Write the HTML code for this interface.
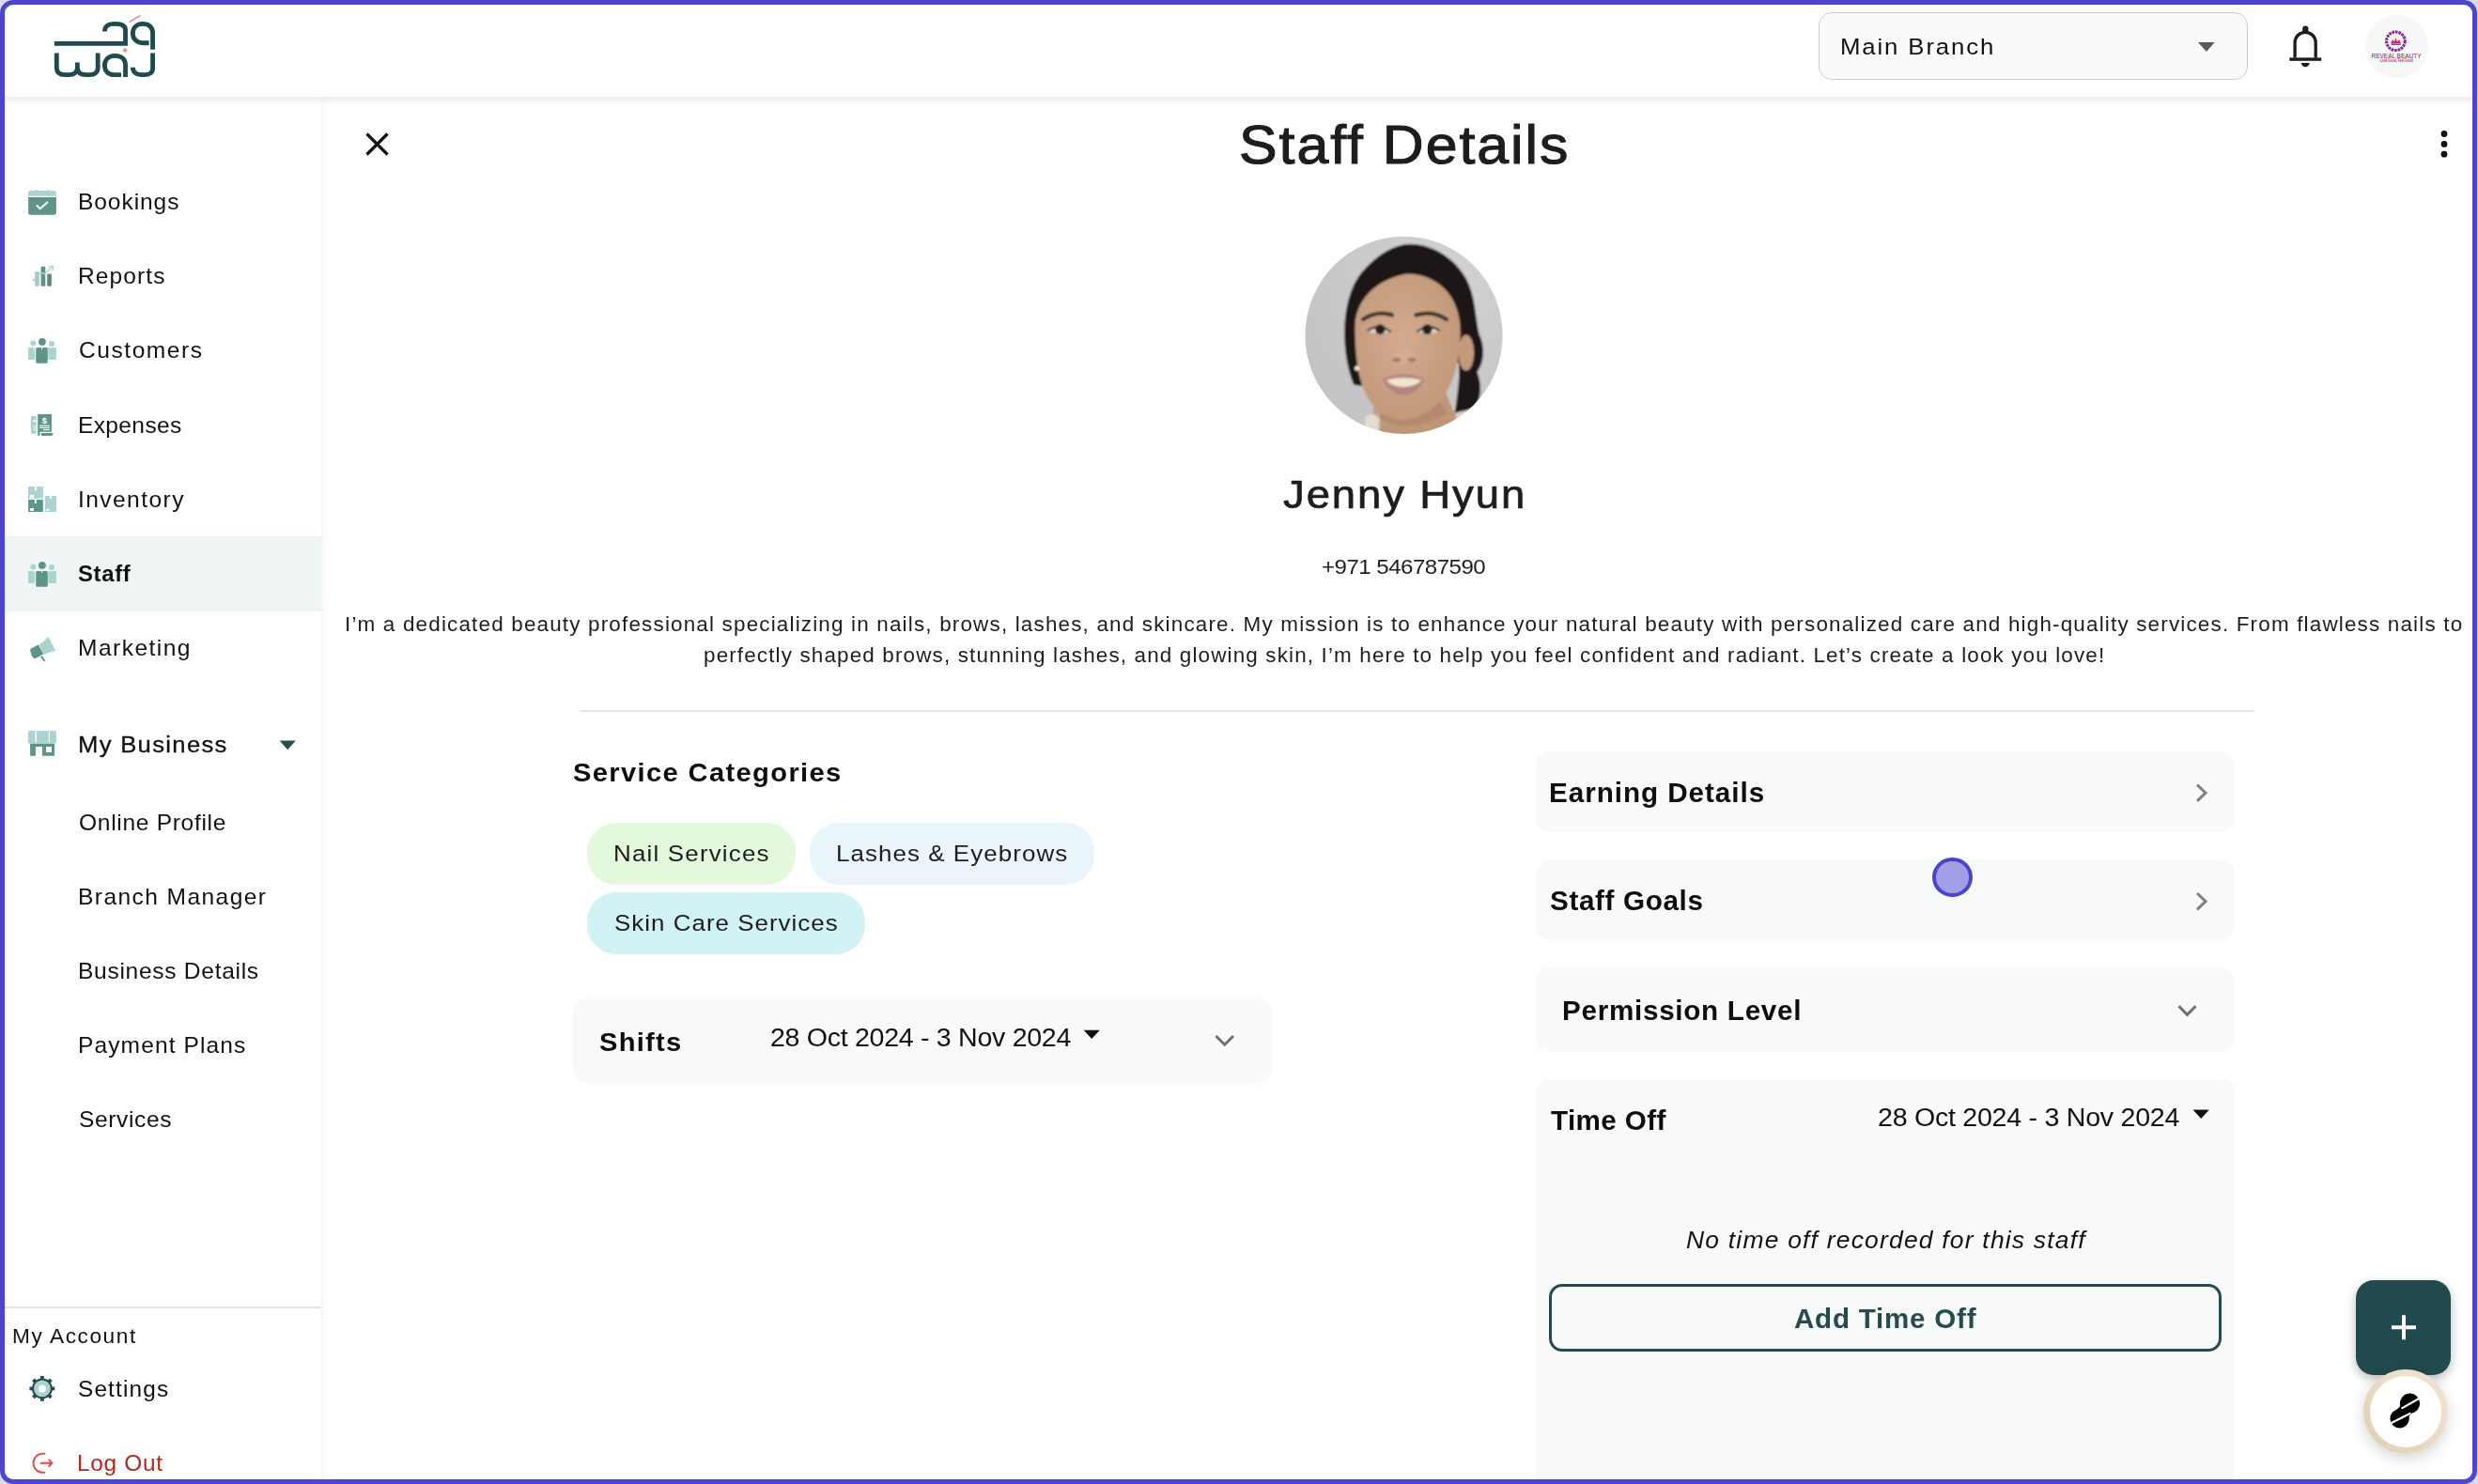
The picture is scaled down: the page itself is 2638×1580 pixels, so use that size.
<!DOCTYPE html>
<html><head><meta charset="utf-8">
<style>
*{margin:0;padding:0;box-sizing:border-box}
html,body{width:2638px;height:1580px;overflow:hidden;background:#dcd9f4;font-family:"Liberation Sans",sans-serif;color:#1d1d1b}
#page{position:absolute;left:0;top:0;width:2637px;height:1580px;border-radius:14px;background:#fff;overflow:hidden}
#frame{position:absolute;left:0;top:0;width:2637px;height:1580px;border:5px solid #4c45d0;border-radius:14px;z-index:50;pointer-events:none}
.t{position:absolute;white-space:nowrap;line-height:1;z-index:10}
svg{position:absolute;overflow:visible}
.abs{position:absolute}
#header{position:absolute;left:0;top:0;width:2637px;height:103px;background:#fff;box-shadow:0 3px 8px rgba(80,70,30,0.12);z-index:5}
#sidebar{position:absolute;left:0;top:103px;width:342px;height:1477px;background:#fff;box-shadow:1px 0 8px rgba(80,70,30,0.08);z-index:4}
.card{position:absolute;background:#f8faf9;border-radius:15px}
.chip{position:absolute;border-radius:31px;height:66px}
</style></head>
<body>
<div id="page">
  <div id="header">
    <!-- logo -->
    <svg style="left:40px;top:10px" width="150" height="85" viewBox="0 0 2478 1404">
      <g fill="none" stroke="#1f4a4e" stroke-width="80" stroke-linecap="butt" stroke-linejoin="miter">
        <path d="M295 600 H1545 V360 C1545 290 1490 255 1360 255 C1235 255 1180 295 1180 390"/>
        <path d="M2025 705 V420 C2025 310 1960 255 1850 255 C1745 255 1675 320 1675 420 C1675 520 1745 590 1850 590 H1960"/>
        <path d="M335 770 V1030 C335 1110 395 1150 475 1150 H560 C640 1150 700 1100 700 1030 V935"/>
        <path d="M700 1030 C700 1110 760 1150 845 1150 H925 C1005 1150 1060 1105 1060 1030 V770"/>
        <path d="M1545 1190 V975 C1545 875 1470 815 1360 815 C1250 815 1180 885 1180 985 C1180 1085 1250 1150 1350 1150 H1470"/>
        <path d="M2025 770 V1040 C2025 1110 1965 1150 1880 1150 H1820 C1730 1150 1675 1100 1675 1020"/>
      </g>
      <path d="M1625 215 L1795 115" stroke="#e9939f" stroke-width="32" stroke-linecap="round"/>
      <path d="M1540 675 L1585 720 L1540 765 L1495 720 Z" fill="#e9939f"/>
    </svg>
    <!-- branch selector -->
    <div class="abs" style="left:1936px;top:13px;width:457px;height:72px;border:1.5px solid #cdccc6;border-radius:14px;background:#fafafa"></div>
    <svg style="left:0;top:0" width="1" height="1"><path d="M2340 45 H2357.7 L2348.85 55 Z" fill="#5a5a58"/></svg>
    <!-- bell -->
    <svg style="left:0;top:0" width="1" height="1">
      <path d="M2443.1 61.6 V45.3 A11.05 11.05 0 0 1 2465.2 45.3 V61.6" fill="none" stroke="#1c1c1a" stroke-width="3.3"/>
      <rect x="2437.4" y="61.4" width="33.8" height="3.4" fill="#1c1c1a"/>
      <path d="M2451.2 33.5 V30.6 A3.1 3.1 0 0 1 2457.4 30.6 V33.5 Z" fill="#1c1c1a"/>
      <path d="M2450 67 H2458.5 A4.25 4.25 0 0 1 2450 67 Z" fill="#1c1c1a"/>
    </svg>
    <!-- avatar -->
    <div class="abs" style="left:2518px;top:16px;width:67px;height:67px;border-radius:50%;background:#f7f7f8"></div>
    <svg style="left:0;top:0" width="1" height="1">
      <circle cx="2550.4" cy="43.8" r="9.8" fill="none" stroke="#7a2a8c" stroke-width="3" stroke-dasharray="2.6 0.9"/>
      <path d="M2545 46.5 L2547 42 L2549 44.5 L2550.4 40 L2552 44.5 L2554 42 L2556 46.5 Z" fill="#d1207e"/>
      <rect x="2545.5" y="46.8" width="10" height="1.2" fill="#d1207e"/>
      <text x="2551" y="61.8" font-family="Liberation Sans" font-size="6.8" fill="#6a2379" text-anchor="middle" textLength="53" lengthAdjust="spacingAndGlyphs">REVEAL BEAUTY</text>
      <text x="2551.3" y="66" font-family="Liberation Sans" font-weight="700" font-size="4.6" fill="#d8237f" text-anchor="middle" textLength="35" lengthAdjust="spacingAndGlyphs">Look Good, Feel Good</text>
    </svg>
  </div>

  <div id="sidebar">
  </div>
  <!-- sidebar content (page coords) -->
  <div class="abs" style="left:5px;top:571px;width:337px;height:79.5px;background:#eff5f4;z-index:6"></div>
  <div class="abs" style="left:5px;top:1391px;width:337px;height:2px;background:#e4e4e4;z-index:6"></div>

  <!-- Bookings icon -->
  <svg style="left:20px;top:190px;z-index:7" width="50" height="50" viewBox="0 0 50 50">
    <path d="M12.1 13 H37.9 Q39.9 13 39.9 15 V18.7 H10.1 V15 Q10.1 13 12.1 13 Z" fill="#acd3cf"/>
    <rect x="18.2" y="12" width="1.7" height="1.5" fill="#acd3cf"/><rect x="30.2" y="12" width="1.7" height="1.5" fill="#acd3cf"/>
    <path d="M10.1 20 H39.9 V36.5 Q39.9 38.7 37.7 38.7 H12.3 Q10.1 38.7 10.1 36.5 Z" fill="#5f9488"/>
    <path d="M19.5 29 L22.6 32.2 L30.4 25.6" fill="none" stroke="#fff" stroke-width="2" stroke-linecap="round" stroke-linejoin="round"/>
  </svg>
  <!-- Reports icon -->
  <svg style="left:20px;top:270px;z-index:7" width="50" height="50" viewBox="0 0 50 50">
    <rect x="17.2" y="19.2" width="4.7" height="15.5" rx="1" fill="#a3c8c5"/>
    <rect x="23.6" y="13.8" width="4.7" height="20.9" rx="1" fill="#5f9488"/>
    <rect x="30.2" y="21.6" width="4.7" height="13.1" rx="1" fill="#5e8a7f"/>
    <path d="M15.2 28.6 L21 22.8 Q24.5 19.5 27.5 21.6 L35.6 14" fill="none" stroke="#acd3cf" stroke-width="1.4" stroke-linecap="round"/>
    <path d="M31.4 13.6 H36.2 V18.4" fill="none" stroke="#acd3cf" stroke-width="1.4"/>
  </svg>
  <!-- Customers icon -->
  <svg style="left:20px;top:348px;z-index:7" width="50" height="50" viewBox="0 0 50 50" id="ppl">
    <circle cx="15.3" cy="17.6" r="3" fill="#acd3cf"/>
    <path d="M11.1 22 H14.9 L15.4 24 L15.9 22 H16.9 V34.9 H11.1 Q10.1 34.9 10.1 33.9 V23 Q10.1 22 11.1 22 Z" fill="#acd3cf"/>
    <circle cx="35" cy="18.1" r="3" fill="#acd3cf"/>
    <path d="M31.3 22 H33.9 L34.4 24.5 L34.9 22 H38.9 Q39.9 22 39.9 23 V34 Q39.9 35 38.9 35 H31.3 Z" fill="#acd3cf"/>
    <circle cx="24.9" cy="15.9" r="3.9" fill="#5f9488"/>
    <path d="M19.7 22 H23.9 L24.6 25 L25.3 22 H29.3 Q30.8 22 30.8 23.5 V37.2 Q30.8 38.7 29.3 38.7 H19.7 Q18.2 38.7 18.2 37.2 V23.5 Q18.2 22 19.7 22 Z" fill="#5f9488"/>
  </svg>
  <!-- Expenses icon -->
  <svg style="left:20px;top:427px;z-index:7" width="50" height="50" viewBox="0 0 50 50">
    <path d="M14.1 16 H18.7 V34.7 H14.1 Q13.1 34.7 13.1 33.7 V17 Q13.1 16 14.1 16 Z" fill="#a8cfcb"/>
    <rect x="15" y="20" width="3.7" height="2.2" fill="#fff" opacity="0.8"/>
    <rect x="15" y="26.3" width="3.7" height="1" fill="#fff" opacity="0.8"/>
    <rect x="15" y="28.3" width="3.7" height="1" fill="#fff" opacity="0.8"/>
    <rect x="15" y="30.3" width="3.7" height="1" fill="#fff" opacity="0.8"/>
    <path d="M20.2 14 H34.9 V32.7 H22.4 V35.9 Q22.4 36.9 21.4 36.9 H21.2 Q20.2 36.9 20.2 35.9 Z" fill="#5f9488"/>
    <path d="M23.9 34 H36.7 L36 36.2 Q35.6 37 34.8 37 H23.9 Z" fill="#5f9488"/>
    <text x="27.5" y="23.6" font-family="Liberation Sans" font-weight="700" font-size="9.5" fill="#fff" text-anchor="middle">$</text>
    <rect x="22" y="25.7" width="10.9" height="1.1" fill="#fff"/>
    <rect x="22" y="27.8" width="10.9" height="1.1" fill="#fff"/>
    <rect x="26" y="29.9" width="6.9" height="1.1" fill="#fff"/>
  </svg>
  <!-- Inventory icon -->
  <svg style="left:20px;top:506px;z-index:7" width="50" height="50" viewBox="0 0 50 50">
    <path d="M10.1 12.1 H16.8 V16.2 H18.9 V12.1 H25.8 V24.8 H10.1 Z" fill="#acd3cf"/>
    <rect x="12" y="21" width="4" height="2.9" fill="#fff"/>
    <path d="M10.1 26.1 H16.8 V30.1 H18.9 V26.1 H25.8 V38.9 H10.1 Z" fill="#5f9488"/>
    <rect x="12" y="35" width="4" height="2.9" fill="#fff"/>
    <path d="M28.1 22.1 H32.9 V25.1 H35 V22.1 H39.9 V38.9 H28.1 Z" fill="#acd3cf"/>
    <rect x="29" y="36" width="3.3" height="1.9" fill="#fff"/>
  </svg>
  <!-- Staff icon -->
  <svg style="left:20px;top:585.6px;z-index:7" width="50" height="50" viewBox="0 0 50 50">
    <circle cx="15.3" cy="17.6" r="3" fill="#acd3cf"/>
    <path d="M11.1 22 H14.9 L15.4 24 L15.9 22 H16.9 V34.9 H11.1 Q10.1 34.9 10.1 33.9 V23 Q10.1 22 11.1 22 Z" fill="#acd3cf"/>
    <circle cx="35" cy="18.1" r="3" fill="#acd3cf"/>
    <path d="M31.3 22 H33.9 L34.4 24.5 L34.9 22 H38.9 Q39.9 22 39.9 23 V34 Q39.9 35 38.9 35 H31.3 Z" fill="#acd3cf"/>
    <circle cx="24.9" cy="15.9" r="3.9" fill="#5f9488"/>
    <path d="M19.7 22 H23.9 L24.6 25 L25.3 22 H29.3 Q30.8 22 30.8 23.5 V37.2 Q30.8 38.7 29.3 38.7 H19.7 Q18.2 38.7 18.2 37.2 V23.5 Q18.2 22 19.7 22 Z" fill="#5f9488"/>
  </svg>
  <!-- Marketing icon -->
  <svg style="left:20px;top:664px;z-index:7" width="50" height="50" viewBox="0 0 50 50">
    <path d="M21.6 21.9 Q27 19.5 31.3 13.5 L39.4 29.3 Q32 29.8 27 33.4 Z" fill="#acd3cf"/>
    <path d="M13.8 26 L20.9 22.6 L26.3 32.3 L19 36.6 Q15.5 38 14 34.5 L12.4 30 Q11.5 27 13.8 26 Z" fill="#5f9488"/>
    <path d="M24.3 35.4 L27 39.1" stroke="#5f9488" stroke-width="2" stroke-linecap="round"/>
  </svg>
  <!-- My Business icon -->
  <svg style="left:20px;top:767px;z-index:7" width="50" height="50" viewBox="0 0 50 50">
    <path d="M12.5 11.1 H37.5 Q40 11.1 40 13.6 V22.5 Q40 24.9 37.5 24.9 H12.3 Q9.8 24.9 9.8 22.5 V13.6 Q9.8 11.1 12.5 11.1 Z" fill="#acd3cf"/>
    <rect x="17.5" y="11" width="1.4" height="12.5" fill="#fff"/>
    <rect x="31.8" y="11" width="1.1" height="12.5" fill="#fff"/>
    <path d="M12.1 24.9 H38.1 V37.7 H24.9 V28 H17.9 V37.7 H12.1 Z" fill="#5f9488"/>
    <rect x="29" y="28" width="6" height="6" fill="#fff"/>
  </svg>
  <!-- My Business caret -->
  <svg style="left:0;top:0;z-index:7" width="1" height="1"><path d="M297.6 788.5 H314.8 L306.2 798.2 Z" fill="#2a4f50"/></svg>
  <!-- Settings icon -->
  <svg style="left:20px;top:1453px;z-index:7" width="50" height="50" viewBox="0 0 50 50">
    <g fill="#234a4e" transform="translate(24.9 25.4)">
      <circle r="10.9"/>
      <rect x="-1.9" y="-13.4" width="3.8" height="5" /><rect x="-1.9" y="-13.4" width="3.8" height="5" transform="rotate(45)"/>
      <rect x="-1.9" y="-13.4" width="3.8" height="5" transform="rotate(90)"/><rect x="-1.9" y="-13.4" width="3.8" height="5" transform="rotate(135)"/>
      <rect x="-1.9" y="-13.4" width="3.8" height="5" transform="rotate(180)"/><rect x="-1.9" y="-13.4" width="3.8" height="5" transform="rotate(225)"/>
      <rect x="-1.9" y="-13.4" width="3.8" height="5" transform="rotate(270)"/><rect x="-1.9" y="-13.4" width="3.8" height="5" transform="rotate(315)"/>
      <circle r="8.9" fill="#acd3cf"/>
      <circle r="4" fill="#fff"/>
    </g>
  </svg>
  <!-- Logout icon -->
  <svg style="left:20px;top:1532px;z-index:7" width="50" height="50" viewBox="0 0 50 50">
    <path d="M27.4 15.8 Q26.5 15.6 25.6 15.6 A10.1 10.1 0 0 0 25.6 35.8 Q26.5 35.8 27.4 35.7" fill="none" stroke="#dc4b45" stroke-width="1.9" stroke-linecap="round"/>
    <path d="M23.6 25.7 H35.4 M32.2 22.4 L35.5 25.7 L32.2 29" fill="none" stroke="#dc4b45" stroke-width="1.9" stroke-linecap="round" stroke-linejoin="round"/>
  </svg>

  <!-- MAIN -->
  <svg style="left:0;top:0" width="1" height="1">
    <path d="M390.5 142.5 L412.5 164.5 M412.5 142.5 L390.5 164.5" stroke="#111" stroke-width="3.2"/>
    <circle cx="2602" cy="142.5" r="3.4" fill="#111"/><circle cx="2602" cy="153.4" r="3.4" fill="#111"/><circle cx="2602" cy="164.2" r="3.4" fill="#111"/>
  </svg>
  <!-- photo -->
  <svg style="left:1370px;top:240px" width="250" height="240" viewBox="0 0 1546 1484">
    <defs>
      <clipPath id="pc"><circle cx="770" cy="723" r="650"/></clipPath>
      <radialGradient id="bgg" cx="0.7" cy="0.25" r="0.9"><stop offset="0" stop-color="#d2d2d2"/><stop offset="1" stop-color="#c0c0c0"/></radialGradient>
      <radialGradient id="skin" cx="0.45" cy="0.45" r="0.7"><stop offset="0" stop-color="#d3ab8e"/><stop offset="1" stop-color="#bf9477"/></radialGradient>
    </defs>
    <filter id="soft" x="-5%" y="-5%" width="110%" height="110%"><feGaussianBlur stdDeviation="5"/></filter>
    <g clip-path="url(#pc)"><g filter="url(#soft)">
      <rect x="0" y="0" width="1546" height="1484" fill="url(#bgg)"/>
      <path d="M520 1250 L650 1225 L670 1420 L500 1420 Z" fill="#e2dbd0"/>
      <path d="M1080 1190 L1215 1160 L1270 1300 L1100 1360 Z" fill="#d8d2c6"/>
      <path d="M440 1050 C350 830 350 470 500 300 C600 185 715 122 810 122 C960 125 1100 210 1180 350 C1240 460 1240 600 1265 715 C1308 800 1298 905 1252 965 C1288 1050 1278 1150 1232 1205 L1105 1235 C1125 1100 1140 990 1130 900 L520 1060 Z" fill="#1b1715"/>
      <path d="M640 1100 L1045 1100 L1112 1250 L1112 1484 L600 1484 L612 1250 Z" fill="#c09679"/>
      <path d="M575 1175 Q765 1330 1010 1165 L1060 1235 Q765 1400 565 1240 Z" fill="#a98064" opacity="0.55"/>
      <ellipse cx="1180" cy="838" rx="52" ry="118" fill="#c49a7d"/>
      <path d="M448 700 C440 470 590 318 795 318 C1000 318 1142 470 1142 700 C1142 900 1092 1080 982 1180 C902 1255 827 1282 765 1282 C680 1282 590 1232 530 1132 C470 1022 452 880 448 700 Z" fill="url(#skin)"/>
      <path d="M448 640 C470 470 600 350 805 316 C620 270 455 380 440 600 Z" fill="#1b1715"/>
      <path d="M805 316 C960 330 1090 420 1130 580 C1140 450 1070 330 960 295 Z" fill="#1b1715"/>
      <circle cx="462" cy="940" r="16" fill="#efe9de"/>
      <path d="M502 618 Q592 558 692 590" fill="none" stroke="#43332b" stroke-width="27" stroke-linecap="round"/>
      <path d="M850 590 Q960 558 1050 618" fill="none" stroke="#43332b" stroke-width="27" stroke-linecap="round"/>
      <ellipse cx="610" cy="688" rx="70" ry="24" fill="#e9ddd2"/>
      <ellipse cx="930" cy="688" rx="70" ry="24" fill="#e9ddd2"/>
      <circle cx="614" cy="684" r="33" fill="#2c1f19"/>
      <circle cx="924" cy="684" r="33" fill="#2c1f19"/>
      <path d="M530 693 Q610 640 683 700" fill="none" stroke="#2a1e18" stroke-width="14"/>
      <path d="M857 700 Q930 640 1006 693" fill="none" stroke="#2a1e18" stroke-width="14"/>
      <ellipse cx="772" cy="865" rx="70" ry="45" fill="#d9b69b" opacity="0.5"/>
      <ellipse cx="722" cy="885" rx="28" ry="14" fill="#96684f" opacity="0.7"/>
      <ellipse cx="822" cy="885" rx="28" ry="14" fill="#96684f" opacity="0.7"/>
      <path d="M628 1012 Q770 948 908 1012 Q862 1112 768 1118 Q675 1112 628 1012 Z" fill="#b48482"/>
      <path d="M652 1018 Q770 990 888 1018 Q842 1062 768 1064 Q694 1062 652 1018 Z" fill="#eee5cc"/>
    </g></g>
  </svg>
  <div class="abs" style="left:617px;top:755.5px;width:1783px;height:2px;background:#e6e6e6"></div>

  <!-- chips -->
  <div class="chip" style="left:624.5px;top:875.7px;width:222.8px;background:#e4f9dc"></div>
  <div class="chip" style="left:862px;top:875.7px;width:303.3px;background:#e9f4fb"></div>
  <div class="chip" style="left:624.5px;top:949.5px;width:296.6px;background:#d2f3f5"></div>

  <!-- cards -->
  <div class="card" style="left:610px;top:1063px;width:744px;height:89.5px"></div>
  <div class="card" style="left:1635px;top:800px;width:744px;height:86px"></div>
  <div class="card" style="left:1635px;top:915.3px;width:744px;height:86px"></div>
  <div class="card" style="left:1635px;top:1030.4px;width:744px;height:89.6px"></div>
  <div class="card" style="left:1635px;top:1149px;width:744px;height:500px"></div>

  <svg style="left:0;top:0;z-index:8" width="1" height="1">
    <path d="M1294.5 1103 L1303.7 1112.2 L1313 1103" fill="none" stroke="#707070" stroke-width="3"/>
    <path d="M2339 835.5 L2348 844.2 L2339 852.9" fill="none" stroke="#808080" stroke-width="3"/>
    <path d="M2339 951 L2348 959.7 L2339 968.4" fill="none" stroke="#808080" stroke-width="3"/>
    <path d="M2319.5 1071.2 L2328.5 1080.4 L2337.5 1071.2" fill="none" stroke="#707070" stroke-width="3"/>
    <path d="M1153.6 1096.7 H1170.8 L1162.2 1106 Z" fill="#111"/>
    <path d="M2334.5 1181.5 H2351.8 L2343.15 1191 Z" fill="#111"/>
  </svg>

  <!-- add time off button -->
  <div class="abs" style="left:1649.3px;top:1366.8px;width:715.5px;height:72px;border:3.8px solid #274a4c;border-radius:14px;z-index:8"></div>

  <!-- cursor -->
  <div class="abs" style="left:2057.4px;top:912.6px;width:42.4px;height:42.4px;border-radius:50%;background:#a29fe6;border:4.5px solid #4b44cf;z-index:9"></div>

  <!-- FABs -->
  <div class="abs" style="left:2508.3px;top:1363.1px;width:101px;height:100.6px;border-radius:19px;background:#204a4d;box-shadow:0 4px 12px rgba(0,0,0,0.28);z-index:11"></div>
  <svg style="left:0;top:0;z-index:12" width="1" height="1">
    <path d="M2546 1413.3 H2572 M2559 1400.3 V1426.3" stroke="#fff" stroke-width="4"/>
  </svg>
  <div class="abs" style="left:2516px;top:1458px;width:90px;height:90px;border-radius:50%;background:linear-gradient(225deg,#f1e7d6,#dfceb3);box-shadow:0 5px 16px rgba(0,0,0,0.17);z-index:13"><div style="position:absolute;left:7px;top:7px;width:76px;height:76px;border-radius:50%;background:#fff"></div></div>
  <svg style="left:0;top:0;z-index:14" width="1" height="1">
    <circle cx="2565.5" cy="1494.2" r="10.6" fill="#000"/>
    <circle cx="2554.6" cy="1510.4" r="10.2" fill="#000"/>
    <path d="M2557.5 1494.5 L2569 1503 L2562.5 1510 L2551 1501.5 Z" fill="#000"/>
    <path d="M2556.5 1499.6 L2576.5 1488.3 M2545.3 1515.2 L2566.5 1504.6" stroke="#fff" stroke-width="2.2"/>
  </svg>

  <div class="t" style="left:82.58px;top:203.9px;font-size:23.2px;letter-spacing:0.852px;color:#111;transform:scaleX(1.06);transform-origin:0 0">Bookings</div>
  <div class="t" style="left:82.58px;top:283.1px;font-size:23.2px;letter-spacing:1.009px;color:#111;transform:scaleX(1.06);transform-origin:0 0">Reports</div>
  <div class="t" style="left:83.64px;top:362.3px;font-size:23.2px;letter-spacing:1.439px;color:#111;transform:scaleX(1.06);transform-origin:0 0">Customers</div>
  <div class="t" style="left:82.58px;top:441.5px;font-size:23.2px;letter-spacing:0.318px;color:#111;transform:scaleX(1.06);transform-origin:0 0">Expenses</div>
  <div class="t" style="left:82.58px;top:520.7px;font-size:23.2px;letter-spacing:1.335px;color:#111;transform:scaleX(1.06);transform-origin:0 0">Inventory</div>
  <div class="t" style="left:82.97px;top:599.9px;font-size:23.2px;letter-spacing:0.648px;color:#111;transform:scaleX(1.03);transform-origin:0 0;font-weight:700">Staff</div>
  <div class="t" style="left:82.58px;top:679.1px;font-size:23.2px;letter-spacing:1.363px;color:#111;transform:scaleX(1.06);transform-origin:0 0">Marketing</div>
  <div class="t" style="left:82.68px;top:780.8px;font-size:24.2px;letter-spacing:1.232px;color:#111;transform:scaleX(1.06);transform-origin:0 0;-webkit-text-stroke:0.3px #111">My Business</div>
  <div class="t" style="left:83.64px;top:865.0px;font-size:23.2px;letter-spacing:0.644px;color:#111;transform:scaleX(1.06);transform-origin:0 0">Online Profile</div>
  <div class="t" style="left:82.58px;top:944.0px;font-size:23.2px;letter-spacing:1.325px;color:#111;transform:scaleX(1.06);transform-origin:0 0">Branch Manager</div>
  <div class="t" style="left:82.58px;top:1023.0px;font-size:23.2px;letter-spacing:0.658px;color:#111;transform:scaleX(1.06);transform-origin:0 0">Business Details</div>
  <div class="t" style="left:82.58px;top:1102.0px;font-size:23.2px;letter-spacing:1.016px;color:#111;transform:scaleX(1.06);transform-origin:0 0">Payment Plans</div>
  <div class="t" style="left:83.64px;top:1181.0px;font-size:23.2px;letter-spacing:0.577px;color:#111;transform:scaleX(1.06);transform-origin:0 0">Services</div>
  <div class="t" style="left:13.18px;top:1413.0px;font-size:21.4px;letter-spacing:1.47px;color:#111;transform:scaleX(1.06);transform-origin:0 0">My Account</div>
  <div class="t" style="left:83.34px;top:1467.6px;font-size:23.0px;letter-spacing:1.084px;color:#111;transform:scaleX(1.06);transform-origin:0 0">Settings</div>
  <div class="t" style="left:82.28px;top:1547.0px;font-size:23.0px;letter-spacing:0.676px;color:#b3261e;transform:scaleX(1.06);transform-origin:0 0">Log Out</div>
  <div class="t" style="left:1319.02px;top:125.7px;font-size:57.4px;letter-spacing:1.857px;color:#1d1d1b;transform:scaleX(1.06);transform-origin:0 0;-webkit-text-stroke:1.1px #1d1d1b">Staff Details</div>
  <div class="t" style="left:1366.24px;top:504.7px;font-size:42.9px;letter-spacing:1.795px;color:#1d1d1b;transform:scaleX(1.06);transform-origin:0 0;-webkit-text-stroke:0.7px #1d1d1b">Jenny Hyun</div>
  <div class="t" style="left:1407.14px;top:591.7px;font-size:22.7px;letter-spacing:-0.475px;color:#1d1d1b;transform:scaleX(1.06);transform-origin:0 0">+971 546787590</div>
  <div class="t" style="left:366.88px;top:653.8px;font-size:21.2px;letter-spacing:1.101px;color:#1d1d1b;transform:scaleX(1.06);transform-origin:0 0">I’m a dedicated beauty professional specializing in nails, brows, lashes, and skincare. My mission is to enhance your natural beauty with personalized care and high-quality services. From flawless nails to</div>
  <div class="t" style="left:748.94px;top:686.6px;font-size:21.2px;letter-spacing:1.072px;color:#1d1d1b;transform:scaleX(1.06);transform-origin:0 0">perfectly shaped brows, stunning lashes, and glowing skin, I’m here to help you feel confident and radiant. Let’s create a look you love!</div>
  <div class="t" style="left:610.37px;top:807.7px;font-size:28.3px;letter-spacing:1.303px;color:#0e0e0e;transform:scaleX(1.03);transform-origin:0 0;font-weight:700">Service Categories</div>
  <div class="t" style="left:653.18px;top:896.9px;font-size:24.5px;letter-spacing:1.101px;color:#1d1d1b;transform:scaleX(1.06);transform-origin:0 0">Nail Services</div>
  <div class="t" style="left:890.18px;top:896.9px;font-size:24.5px;letter-spacing:0.982px;color:#1d1d1b;transform:scaleX(1.06);transform-origin:0 0">Lashes &amp; Eyebrows</div>
  <div class="t" style="left:654.24px;top:971.0px;font-size:24.5px;letter-spacing:0.937px;color:#1d1d1b;transform:scaleX(1.06);transform-origin:0 0">Skin Care Services</div>
  <div class="t" style="left:638.37px;top:1094.7px;font-size:28.3px;letter-spacing:1.208px;color:#0e0e0e;transform:scaleX(1.03);transform-origin:0 0;font-weight:700">Shifts</div>
  <div class="t" style="left:819.84px;top:1091.8px;font-size:27.0px;letter-spacing:-0.303px;color:#111;transform:scaleX(1.06);transform-origin:0 0">28 Oct 2024 - 3 Nov 2024</div>
  <div class="t" style="left:1649.04px;top:829.9px;font-size:28.8px;letter-spacing:0.917px;color:#0e0e0e;transform:scaleX(1.03);transform-origin:0 0;font-weight:700">Earning Details</div>
  <div class="t" style="left:1650.07px;top:945.4px;font-size:28.8px;letter-spacing:0.621px;color:#0e0e0e;transform:scaleX(1.03);transform-origin:0 0;font-weight:700">Staff Goals</div>
  <div class="t" style="left:1662.64px;top:1062.0px;font-size:28.8px;letter-spacing:0.68px;color:#0e0e0e;transform:scaleX(1.03);transform-origin:0 0;font-weight:700">Permission Level</div>
  <div class="t" style="left:1651.1px;top:1178.6px;font-size:28.8px;letter-spacing:0.359px;color:#0e0e0e;transform:scaleX(1.03);transform-origin:0 0;font-weight:700">Time Off</div>
  <div class="t" style="left:1999.14px;top:1177.4px;font-size:27.0px;letter-spacing:-0.262px;color:#111;transform:scaleX(1.06);transform-origin:0 0">28 Oct 2024 - 3 Nov 2024</div>
  <div class="t" style="left:1794.74px;top:1307.8px;font-size:25.0px;letter-spacing:1.117px;color:#111;transform:scaleX(1.06);transform-origin:0 0;font-style:italic">No time off recorded for this staff</div>
  <div class="t" style="left:1909.67px;top:1389.8px;font-size:28.7px;letter-spacing:0.753px;color:#264b4e;transform:scaleX(1.03);transform-origin:0 0;font-weight:700">Add Time Off</div>
  <div class="t" style="left:1958.58px;top:37.8px;font-size:24.3px;letter-spacing:1.766px;color:#111;transform:scaleX(1.06);transform-origin:0 0">Main Branch</div>
</div>
<div id="frame"></div>
</body></html>
